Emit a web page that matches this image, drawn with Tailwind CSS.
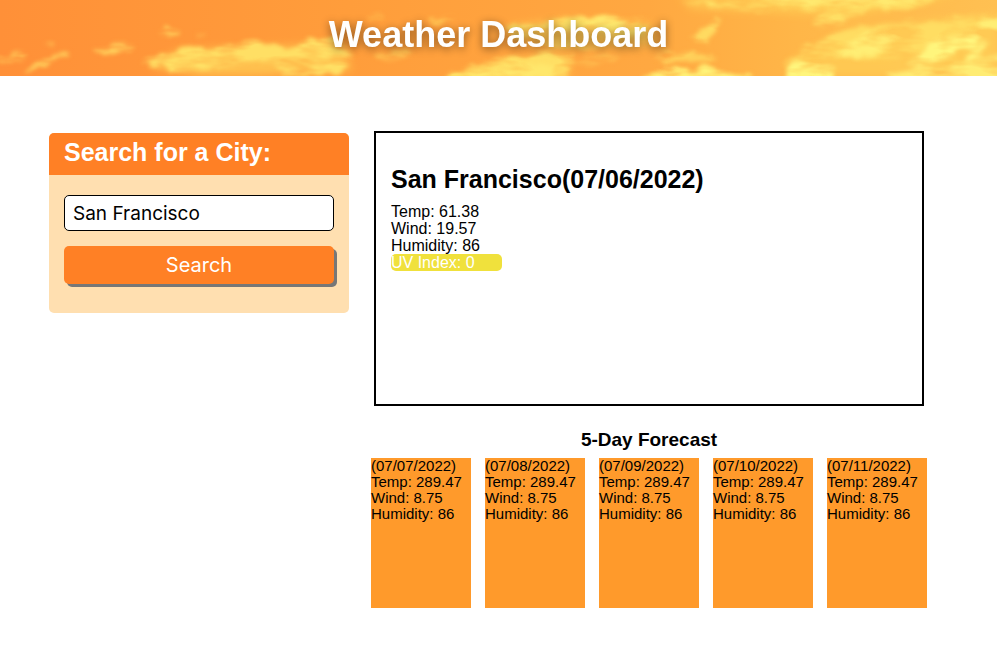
<!DOCTYPE html>
<html lang="en">
<head>
<meta charset="utf-8">
<meta name="viewport" content="width=device-width, initial-scale=1">
<title>Weather Dashboard</title>
<script src="https://cdn.jsdelivr.net/npm/@tailwindcss/browser@4"></script>
</head>
<body class="bg-white text-black font-['Liberation_Sans',Arial,sans-serif]">
<header class="relative overflow-hidden bg-[#ffa03c] px-4 py-[14px]">
  <!-- Sunset sky behind the title -->
  <svg class="absolute inset-0 h-full w-full" viewBox="0 0 997 76" preserveAspectRatio="xMidYMid slice" aria-hidden="true">
    <defs>
      <linearGradient id="sky" x1="0" x2="1" y1="0" y2="0">
        <stop offset="0" stop-color="#ff9038"/><stop offset=".35" stop-color="#ff9d3b"/>
        <stop offset=".65" stop-color="#ffa841"/><stop offset=".8" stop-color="#ffb648"/><stop offset="1" stop-color="#ffc052"/>
      </linearGradient>
      <filter id="cloud" x="-5%" y="-30%" width="110%" height="160%" color-interpolation-filters="sRGB">
        <feTurbulence type="fractalNoise" baseFrequency=".06 .1" numOctaves="3" seed="7" result="n"/>
        <feDisplacementMap in="SourceGraphic" in2="n" scale="14" xChannelSelector="R" yChannelSelector="G"/>
        <feGaussianBlur stdDeviation="2.2" result="soft"/>
        <feTurbulence type="fractalNoise" baseFrequency=".025 .07" numOctaves="3" seed="3"/>
        <feColorMatrix values="0 0 0 0 1  0 0 0 0 1  0 0 0 0 1  2.6 0 0 0 -.55" result="mask"/>
        <feComposite in="soft" in2="mask" operator="in"/>
      </filter>
      <filter id="haze" x="-5%" y="-50%" width="110%" height="200%" color-interpolation-filters="sRGB"><feGaussianBlur stdDeviation="5"/></filter>
    </defs>
    <rect width="997" height="76" fill="url(#sky)"/>
    <g filter="url(#haze)" fill="#ffce55" opacity=".75">
      <path d="M148 66L180 50L340 44L352 70L260 76H200Z"/>
      <path d="M510 26L560 20L650 24L655 44L560 46L510 36Z"/>
      <path d="M465 72L510 60L570 58L568 80H460Z"/>
      <path d="M790 62L850 28L997 14V76H790Z"/>
      <path d="M680 -4H960L850 16L690 8Z"/>
    </g>
    <g filter="url(#cloud)" fill="#ffdf64">
      <path d="M-5 57L16 53L28 55L20 60L-5 61Z" opacity=".9"/>
      <path d="M22 70L42 61L68 51L72 54L42 68L26 72Z" opacity=".8"/>
      <path d="M92 52L112 44L132 43L138 48L118 53L94 55Z" opacity=".8"/>
      <path d="M42 46L54 43L50 48Z" opacity=".5"/>
      <path d="M154 32L168 28L181 34L172 38L157 36Z" opacity=".7"/>
      <path d="M192 34L208 33L202 37Z" opacity=".4"/>
      <path d="M142 62L155 54L173 52L182 45L198 45L213 50L225 44L253 41L266 45L277 41L285 48L308 41L330 38L345 42L352 53L335 62L313 66L286 70L262 64L224 67L190 73L160 68Z"/>
      <path d="M282 66L316 56L346 57L332 70L318 80H286Z"/>
      <path d="M318 60L352 58L344 71L318 78Z"/>
      <path d="M366 17L380 12L384 15L372 21Z" opacity=".7"/>
      <path d="M426 20L451 13L456 16L439 24L428 24Z" opacity=".8"/>
      <path d="M505 25L540 23L570 16L602 15L648 22L640 31L612 39L582 31L544 31L516 37Z"/>
      <path d="M526 45L565 40L604 47L576 51L542 52Z" opacity=".6"/>
      <path d="M449 74L477 65L506 56L548 52L571 55L568 80H448Z"/>
      <path d="M369 56L402 50L416 57L386 62Z" opacity=".5"/>
      <path d="M565 63L604 53L622 58L592 66Z" opacity=".35"/>
      <path d="M642 75L660 67L684 69L705 68L722 72L751 74V82H640Z"/>
      <path d="M658 51L685 50L718 58L710 64L660 61Z" opacity=".7"/>
      <path d="M690 42L700 29L718 16L722 20L712 35L708 44Z" opacity=".9"/>
      <path d="M678 3L738 1L780 -5H955L908 8L836 12L801 8L757 10L708 7Z"/>
      <path d="M808 22L832 12L864 8L843 22L818 26Z"/>
      <path d="M786 63L801 49L834 32L864 27L895 22L938 22L985 15H1010V33L967 33L935 45L907 56L868 60L846 57L799 64Z" opacity=".9"/>
    </g>
    <g filter="url(#cloud)" fill="#fff57c">
      <path d="M790 65L822 63L837 65L832 84H788Z"/>
      <path d="M794 64L822 62L835 66L828 84H791Z"/>
      <path d="M906 63L926 47L950 35L985 31L976 44L949 56L920 68Z"/>
      <path d="M832 54L866 34L907 31L890 47L858 58Z" opacity=".7"/>
      <path d="M890 74L928 66L968 59L1005 56V84H887Z" opacity=".8"/>
      <path d="M965 58L983 38L986 47L974 63Z" opacity=".8"/>
      <path d="M975 20L1005 14V32L980 32Z" opacity=".7"/>
      <path d="M655 68L689 69L724 71L750 76V84H655Z" opacity=".9"/>
      <path d="M575 17L612 16L642 24L603 29Z" opacity=".5"/>
      <path d="M470 73L530 64L558 66L550 78H470Z" opacity=".35"/>
      <path d="M760 -4H930L890 6L780 4Z" opacity=".5"/>
    </g>
  </svg>
  <h1 class="relative text-center text-4xl leading-[42px] font-bold text-white [text-shadow:0_2px_8px_#00000077] pb-[6px]">Weather Dashboard</h1>
</header>
<main class="flex items-start gap-[22px] pt-[55px] pr-[70px] pb-8 pl-[49px]">
  <aside class="mt-[2px] w-[300px] shrink-0 overflow-hidden rounded-[5px] bg-[#ffdfb0]">
    <h2 class="bg-[#ff8025] px-[15px] pt-[5px] pb-[9px] text-[25px] leading-[28px] font-bold text-white"><label for="city">Search for a City:</label></h2>
    <form class="flex flex-col gap-[15px] px-[15px] pt-5 pb-[29px] font-[Inter,sans-serif] text-xl" onsubmit="return false">
      <input id="city" type="text" value="San Francisco" class="h-9 w-full rounded-[5px] border border-black bg-white px-2 text-[19px] text-black">
      <button type="submit" class="h-[38px] w-full rounded-[5px] bg-[#ff8025] text-white shadow-[3px_3px_0_#777]">Search</button>
    </form>
  </aside>
  <div class="min-w-0 flex-1">
    <section class="mx-[3px] min-h-[275px] border-2 border-black px-[15px] pt-8">
      <h2 class="text-[25px] leading-[28px] font-bold">San Francisco(07/06/2022)</h2>
      <div class="mt-[10px] text-base leading-[17px]">
        <p>Temp: 61.38</p>
        <p>Wind: 19.57</p>
        <p>Humidity: 86</p>
        <p class="w-[111px] rounded-[5px] bg-[#f0e13c] text-white">UV Index: 0</p>
      </div>
    </section>
    <section class="mt-[23px]">
      <h3 class="text-center text-[19px] leading-[22px] font-bold">5-Day Forecast</h3>
      <div class="mt-[7px] grid grid-cols-5 gap-[14px] text-[15px] leading-[16px]">
        <article class="min-h-[150px] bg-[#ff9a2b]"><p>(07/07/2022)</p><p>Temp: 289.47</p><p>Wind: 8.75</p><p>Humidity: 86</p></article>
        <article class="min-h-[150px] bg-[#ff9a2b]"><p>(07/08/2022)</p><p>Temp: 289.47</p><p>Wind: 8.75</p><p>Humidity: 86</p></article>
        <article class="min-h-[150px] bg-[#ff9a2b]"><p>(07/09/2022)</p><p>Temp: 289.47</p><p>Wind: 8.75</p><p>Humidity: 86</p></article>
        <article class="min-h-[150px] bg-[#ff9a2b]"><p>(07/10/2022)</p><p>Temp: 289.47</p><p>Wind: 8.75</p><p>Humidity: 86</p></article>
        <article class="min-h-[150px] bg-[#ff9a2b]"><p>(07/11/2022)</p><p>Temp: 289.47</p><p>Wind: 8.75</p><p>Humidity: 86</p></article>
      </div>
    </section>
  </div>
</main>
</body>
</html>
